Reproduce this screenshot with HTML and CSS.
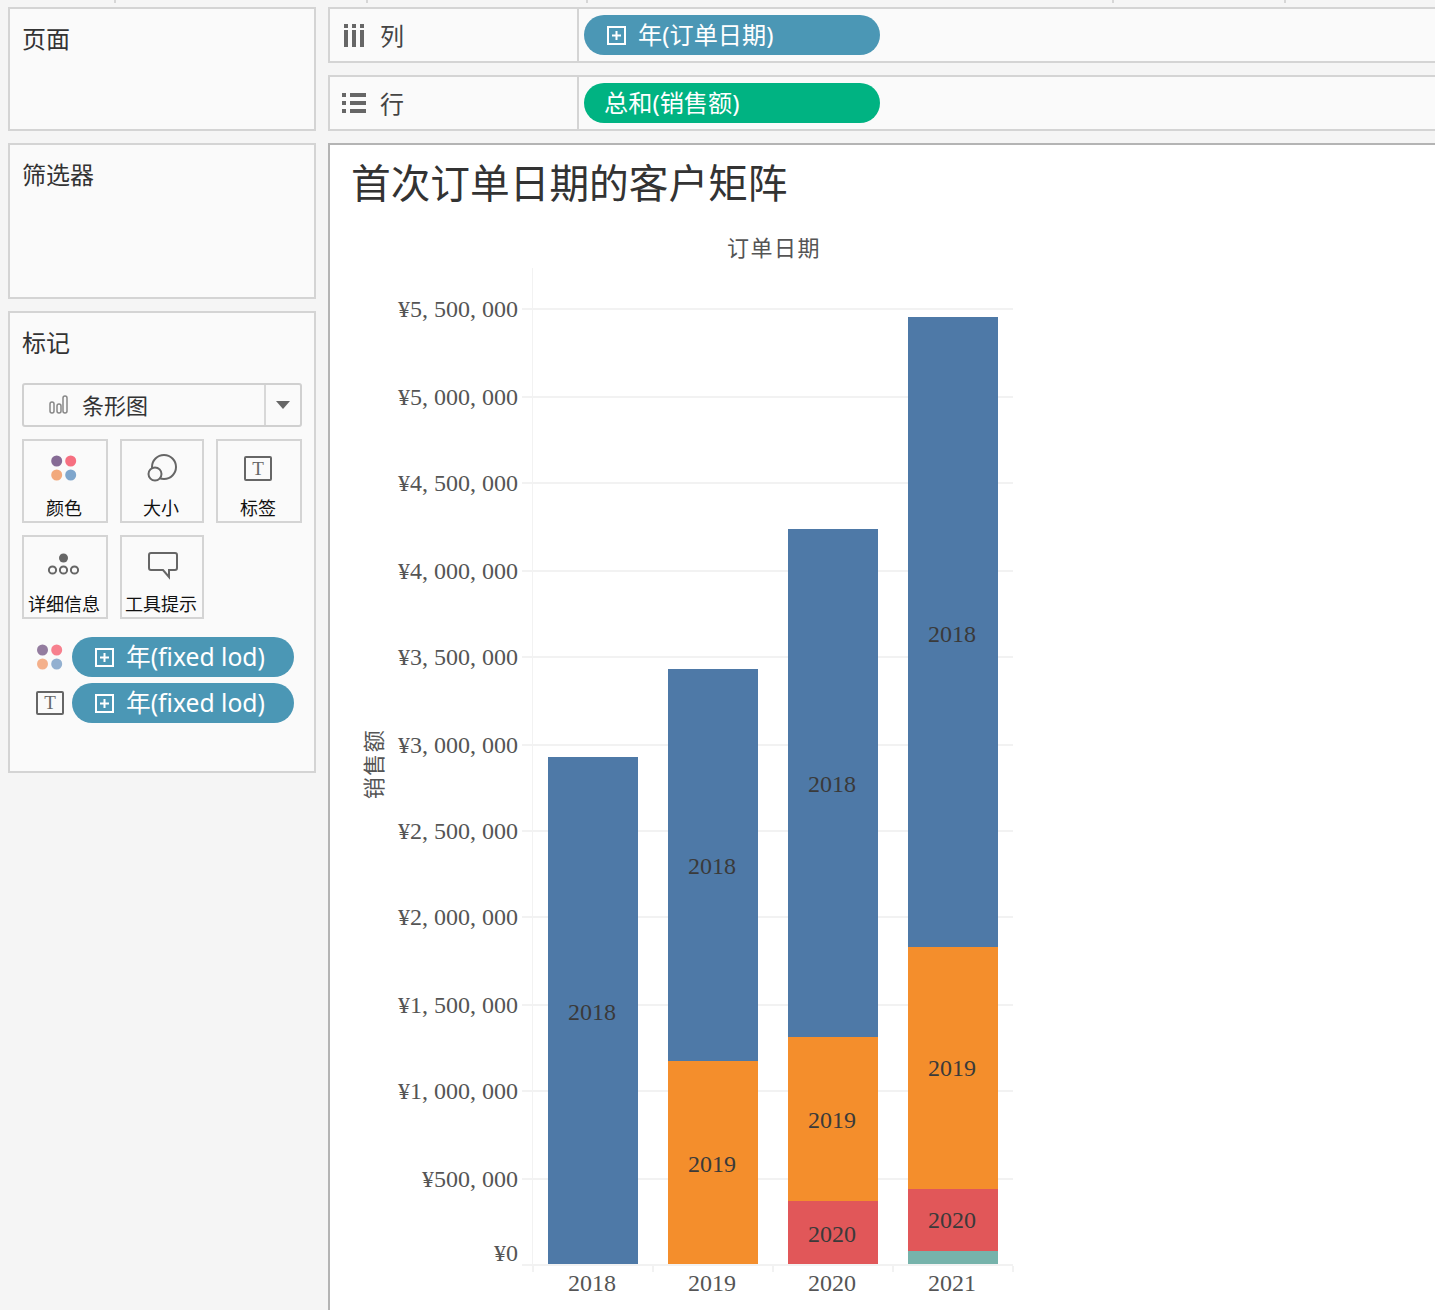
FILE: index.html
```html
<!DOCTYPE html>
<html lang="zh">
<head>
<meta charset="utf-8">
<title>首次订单日期的客户矩阵</title>
<link rel="stylesheet" href="styles.css">
</head>
<body>
<div class="ruler">
  <i class="tick t1"></i><i class="tick t2"></i><i class="tick t3"></i><i class="tick t4"></i><i class="tick t5"></i>
</div>
<div class="workspace">
  <aside class="sidebar">
    <section class="panel panel-pages"><h2 class="panel-title">页面</h2></section>
    <section class="panel panel-filters"><h2 class="panel-title">筛选器</h2></section>
    <section class="panel panel-marks">
      <h2 class="panel-title marks-title">标记</h2>
      <div class="dropdown">
        <svg class="bar-icon" width="20" height="20" viewBox="0 0 20 20"><rect x="2" y="7" width="4" height="11" rx="2"/><rect x="9" y="9" width="4" height="9" rx="2"/><rect x="15" y="1" width="4" height="17" rx="2"/></svg>
        <span class="dropdown-label">条形图</span>
        <span class="dropdown-arrow"><i class="triangle"></i></span>
      </div>
      <div class="cards">
        <div class="card">
          <div class="card-icon"><svg width="36" height="36" viewBox="0 0 36 36"><circle cx="9.7" cy="11" r="5.5" fill="#866b95"/><circle cx="23.7" cy="11" r="5.5" fill="#f66f80"/><circle cx="9.7" cy="25" r="5.5" fill="#f2a97c"/><circle cx="23.7" cy="25" r="5.500" fill="#7fa6cc"/></svg></div>
          <div class="card-label">颜色</div>
        </div>
        <div class="card">
          <div class="card-icon"><svg width="36" height="36" viewBox="0 0 36 36" class="stroke-icon"><circle cx="20" cy="17" r="12"/><circle cx="11" cy="24" r="6.5" class="white-fill"/></svg></div>
          <div class="card-label">大小</div>
        </div>
        <div class="card">
          <div class="card-icon"><svg width="36" height="36" viewBox="0 0 36 36" class="stroke-icon"><rect x="4" y="7" width="26" height="23" rx="1"/><text x="17" y="25" class="t-glyph">T</text></svg></div>
          <div class="card-label">标签</div>
        </div>
        <div class="card">
          <div class="card-icon"><svg width="36" height="36" viewBox="0 0 36 36" class="stroke-icon"><circle cx="16.500" cy="12" r="4.5" class="solid-fill"/><circle cx="5.500" cy="24" r="3.6"/><circle cx="16.500" cy="24" r="3.6"/><circle cx="27.500" cy="24" r="3.6"/></svg></div>
          <div class="card-label">详细信息</div>
        </div>
        <div class="card">
          <div class="card-icon"><svg width="36" height="36" viewBox="0 0 36 36" class="stroke-icon"><path d="M7 7h24a2 2 0 0 1 2 2v13a2 2 0 0 1-2 2h-6v7l-6-7H7a2 2 0 0 1-2-2V9a2 2 0 0 1 2-2z"/></svg></div>
          <div class="card-label">工具提示</div>
        </div>
      </div>
      <div class="mark-fields">
        <div class="mark-field">
          <svg width="28" height="28" viewBox="0 0 28 28" class="mark-icon"><circle cx="6.500" cy="7" r="5.5" fill="#937c9f"/><circle cx="20.700" cy="7" r="5.5" fill="#f7808e"/><circle cx="6.500" cy="21" r="5.5" fill="#f4b08b"/><circle cx="20.700" cy="21" r="5.5" fill="#93b0d0"/></svg>
          <div class="pill pill-blue pill-mark">
            <svg class="plus" width="19" height="19" viewBox="0 0 19 19"><rect x="1" y="1" width="17" height="17"/><path d="M5 9.5h9M9.500 5v9"/></svg>
            <span class="pill-text">年(fixed lod)</span>
          </div>
        </div>
        <div class="mark-field">
          <svg width="28" height="28" viewBox="0 0 28 28" class="mark-icon stroke-icon"><rect x="1" y="3" width="26" height="22" rx="1"/><text x="14" y="20" class="t-glyph">T</text></svg>
          <div class="pill pill-blue pill-mark">
            <svg class="plus" width="19" height="19" viewBox="0 0 19 19"><rect x="1" y="1" width="17" height="17"/><path d="M5 9.5h9M9.500 5v9"/></svg>
            <span class="pill-text">年(fixed lod)</span>
          </div>
        </div>
      </div>
    </section>
  </aside>
  <main class="main">
    <div class="shelf">
      <div class="shelf-head">
        <svg class="shelf-icon" width="24" height="26" viewBox="0 0 24 26"><path d="M2 2h4v4H2zM10 2h4v4h-4zM18 2h4v4h-4zM2 8h4v17H2zM10 8h4v17h-4zM18 8h4v17h-4z"/></svg>
        <span class="shelf-name">列</span>
      </div>
      <div class="shelf-body">
        <div class="pill pill-blue pill-shelf">
          <svg class="plus" width="19" height="19" viewBox="0 0 19 19"><rect x="1" y="1" width="17" height="17"/><path d="M5 9.500h9M9.500 5v9"/></svg>
          <span class="pill-text">年(订单日期)</span>
        </div>
      </div>
    </div>
    <div class="shelf">
      <div class="shelf-head">
        <svg class="shelf-icon" width="24" height="26" viewBox="0 0 24 26"><path d="M0 3h4v4H0zM8 3h16v4H8zM0 11h4v4H0zM8 11h16v4H8zM0 19h4v4H0zM8 19h16v4H8z"/></svg>
        <span class="shelf-name">行</span>
      </div>
      <div class="shelf-body">
        <div class="pill pill-green pill-shelf"><span class="pill-text">总和(销售额)</span></div>
      </div>
    </div>
    <section class="view">
      <h1 class="view-title">首次订单日期的客户矩阵</h1>
      <svg class="chart" width="720" height="1101" viewBox="330 209 720 1101">
        <g class="grid">
          <path d="M522 309H1013M522 397H1013M522 483H1013M522 571H1013M522 657H1013M522 745H1013M522 831H1013M522 917H1013M522 1005H1013M522 1091H1013M522 1179H1013M522 1265H1013"/>
        </g>
        <path class="axis-line" d="M532.500 268V1272"/>
        <path class="axis-tick" d="M533 1266V1272M653 1266V1272M773 1266V1272M893 1266V1272M1013 1266V1272"/>
        <rect x="548" y="757" width="90" height="507" fill="#4e79a7"/>
        <rect x="668" y="669" width="90" height="392" fill="#4e79a7"/>
        <rect x="668" y="1061" width="90" height="203" fill="#f48e2c"/>
        <rect x="788" y="529" width="90" height="508" fill="#4e79a7"/>
        <rect x="788" y="1037" width="90" height="164" fill="#f48e2c"/>
        <rect x="788" y="1201" width="90" height="63" fill="#e15759"/>
        <rect x="908" y="317" width="90" height="630" fill="#4e79a7"/>
        <rect x="908" y="947" width="90" height="242" fill="#f48e2c"/>
        <rect x="908" y="1189" width="90" height="62" fill="#e15759"/>
        <rect x="908" y="1251" width="90" height="13" fill="#76b3ab"/>
        <text class="axis-title" x="774" y="256">订单日期</text>
        <text class="axis-title" transform="translate(382 764) rotate(-90)">销售额</text>
        <g class="y-label">
          <text x="518" y="317">¥5, 500, 000</text>
          <text x="518" y="405">¥5, 000, 000</text>
          <text x="518" y="491">¥4, 500, 000</text>
          <text x="518" y="579">¥4, 000, 000</text>
          <text x="518" y="665">¥3, 500, 000</text>
          <text x="518" y="753">¥3, 000, 000</text>
          <text x="518" y="839">¥2, 500, 000</text>
          <text x="518" y="925">¥2, 000, 000</text>
          <text x="518" y="1013">¥1, 500, 000</text>
          <text x="518" y="1099">¥1, 000, 000</text>
          <text x="518" y="1187">¥500, 000</text>
          <text x="518" y="1261">¥0</text>
        </g>
        <g class="x-label">
          <text x="592" y="1291">2018</text>
          <text x="712" y="1291">2019</text>
          <text x="832" y="1291">2020</text>
          <text x="952" y="1291">2021</text>
        </g>
        <g class="bar-label">
          <text x="592" y="1020">2018</text>
          <text x="712" y="874">2018</text>
          <text x="712" y="1172">2019</text>
          <text x="832" y="792">2018</text>
          <text x="832" y="1128">2019</text>
          <text x="832" y="1242">2020</text>
          <text x="952" y="642">2018</text>
          <text x="952" y="1076">2019</text>
          <text x="952" y="1228">2020</text>
        </g>
      </svg>
    </section>
  </main>
</div>
</body>
</html>
```
FILE: styles.css
```css
* { box-sizing: border-box; }
html, body { margin: 0; padding: 0; }
body {
  width: 1435px;
  height: 1310px;
  overflow: hidden;
  background: #f5f5f5;
  color: #333;
  font-family: "Noto Sans", "Noto Sans CJK SC", sans-serif;
}
.ruler { display: flex; height: 7px; }
.tick { display: block; width: 2px; height: 3px; background: #d6d6d6; }
.t1 { margin-left: 114px; }
.t2 { margin-left: 250px; }
.t3 { margin-left: 218px; }
.t4 { margin-left: 524px; }
.t5 { margin-left: 170px; }

.workspace { display: flex; gap: 12px; padding-left: 8px; height: 1303px; }
.sidebar { width: 308px; flex: none; display: flex; flex-direction: column; gap: 12px; }
.panel { border: 2px solid #d4d4d4; background: #fafafa; padding: 11px 12px 0; }
.panel-pages { height: 124px; }
.panel-filters { height: 156px; }
.panel-marks { height: 462px; }
.panel-title { margin: 0; font-size: 24px; line-height: 36px; font-weight: 400; color: #333; font-family: "Noto Sans CJK SC", sans-serif; }
.marks-title { margin-bottom: 23px; }

.dropdown {
  width: 280px; height: 44px;
  border: 2px solid #d0d0d0; border-radius: 3px;
  display: flex; align-items: center;
  padding-left: 24px;
}
.bar-icon { flex: none; }
.bar-icon rect { fill: none; stroke: #888; stroke-width: 1.5; }
.dropdown-label { margin-left: 14px; font-size: 22px; line-height: 38px; padding-bottom: 2px; font-family: "Noto Sans CJK SC", sans-serif; color: #333; }
.dropdown-arrow {
  margin-left: auto; width: 36px; height: 100%;
  border-left: 2px solid #d8d8d8;
  display: flex; align-items: center; justify-content: center;
}
.triangle { display: block; width: 0; height: 0; border-left: 7px solid transparent; border-right: 7px solid transparent; border-top: 8px solid #666; }

.cards { display: grid; grid-template-columns: 86px 84px 86px; grid-auto-rows: 84px; gap: 12px; margin-top: 12px; }
.card { border: 2px solid #d4d4d4; display: flex; flex-direction: column; align-items: center; }
.card-icon { height: 54px; display: flex; align-items: center; justify-content: center; flex: none; }
.card-label { font-size: 18px; line-height: 24px; padding-right: 2px; color: #111; white-space: nowrap; font-family: "Noto Sans CJK SC", sans-serif; }
.stroke-icon * { fill: none; stroke: #666; stroke-width: 2; }
.stroke-icon .white-fill { fill: #fafafa; }
.stroke-icon .solid-fill { fill: #666; stroke: none; }
.stroke-icon .t-glyph { fill: #666; stroke: none; font-family: "Liberation Serif", serif; font-size: 19px; text-anchor: middle; }

.mark-fields { display: flex; flex-direction: column; gap: 6px; margin-top: 18px; padding-left: 14px; }
.mark-field { display: flex; align-items: center; gap: 8px; }
.mark-icon { flex: none; }

.pill { height: 40px; display: flex; align-items: center; border-radius: 20px; color: #fff; white-space: nowrap; }
.pill-text { padding-bottom: 4px; }
.pill-blue { background: #4b97b5; }
.pill-green { background: #00b382; }
.pill-mark { width: 222px; padding-left: 23px; gap: 12px; font-size: 24.700px; }
.pill-shelf { width: 296px; padding-left: 23px; gap: 12px; font-size: 24.200px; }
.pill-green.pill-shelf { padding-left: 20px; }
.plus { flex: none; }
.plus rect, .plus path { fill: none; stroke: #fff; stroke-width: 2; }

.main { flex: 1; min-width: 0; display: flex; flex-direction: column; gap: 12px; }
.shelf { height: 56px; flex: none; display: flex; background: #fafafa; border: 2px solid #d4d4d4; border-right: 0; }
.shelf-head { width: 249px; flex: none; display: flex; align-items: center; border-right: 2px solid #d4d4d4; padding-left: 12px; gap: 14px; }
.shelf-icon { fill: #666; flex: none; }
.shelf-name { font-size: 24px; line-height: 34px; padding-bottom: 1px; color: #444; font-family: "Noto Sans CJK SC", sans-serif; }
.shelf-body { padding-left: 5px; padding-top: 6px; }

.view { flex: 1; background: #fff; border-top: 2px solid #b4b4b4; border-left: 2px solid #b4b4b4; }
.view-title {
  margin: 0; padding: 17px 0 0 21px;
  font-size: 39.700px; line-height: 47px; font-weight: 400; color: #333;
  font-family: "Liberation Serif", "Noto Sans CJK SC", serif;
}
.chart { display: block; }
.grid path { fill: none; stroke: #f2f2f2; stroke-width: 2; }
.axis-line { fill: none; stroke: #f2f2f2; stroke-width: 1; }
.axis-tick { fill: none; stroke: #f2f2f2; stroke-width: 2; }
.chart text { font-family: "Liberation Serif", "Noto Sans CJK SC", serif; font-size: 24px; }
.y-label text { text-anchor: end; fill: #555; }
.x-label text, .bar-label text { text-anchor: middle; fill: #555; }
.bar-label text { fill: #3a3a3a; }
.chart .axis-title { font-size: 22px; letter-spacing: 1.500px; text-anchor: middle; fill: #555; }
```
